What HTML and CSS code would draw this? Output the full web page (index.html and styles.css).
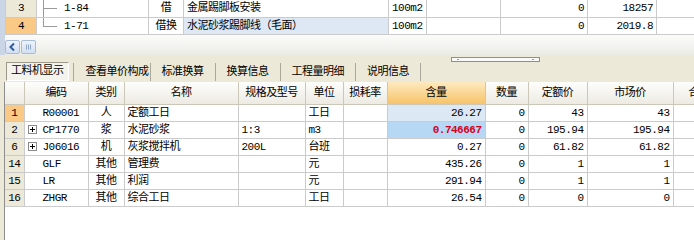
FILE: index.html
```html
<!DOCTYPE html>
<html lang="zh-CN">
<head>
  <meta charset="UTF-8" />
  <title>工料机显示</title>
  <link rel="stylesheet" href="styles.css">
</head>
<body>

<!-- upper grid: sub items -->
<div class="upper">
  <table class="grid grid-top">
    <colgroup>
      <col style="width:31px"><col style="width:112px"><col style="width:35px"><col style="width:205px">
      <col style="width:38px"><col style="width:74px"><col style="width:87px"><col style="width:69px"><col style="width:60px">
    </colgroup>
    <tr>
      <td class="rn">3</td>
      <td class="tree mid">1-84</td>
      <td class="c">借</td>
      <td>金属踢脚板安装</td>
      <td>100m2</td>
      <td></td>
      <td class="n">0</td>
      <td class="n">18257</td>
      <td></td>
    </tr>
    <tr>
      <td class="rn on">4</td>
      <td class="tree last">1-71</td>
      <td class="c">借换</td>
      <td class="pick">水泥砂浆踢脚线（毛面）</td>
      <td>100m2</td>
      <td></td>
      <td class="n">0</td>
      <td class="n">2019.8</td>
      <td></td>
    </tr>
  </table>
  <div class="hscroll">
    <span class="sb-btn">
      <svg width="13" height="12" viewBox="0 0 13 12"><path d="M8 2.5 4.5 6 8 9.5" fill="none" stroke="#2f5d9e" stroke-width="2"/></svg>
    </span>
    <span class="sb-btn">
      <svg width="13" height="12" viewBox="0 0 13 12"><path d="M4.5 3.5v5M6.5 3.5v5M8.5 3.5v5" stroke="#8ea6c8" stroke-width="1"/></svg>
    </span>
  </div>
</div>

<!-- lower pane: resources -->
<div class="lower">
  <div class="splitter"><span class="grip"></span></div>

  <div class="tabs">
    <span class="tab on">工料机显示</span>
    <span class="tab first">查看单价构成</span>
    <span class="tab">标准换算</span>
    <span class="tab">换算信息</span>
    <span class="tab">工程量明细</span>
    <span class="tab end">说明信息</span>
  </div>

  <div class="sheet">
    <table class="grid grid-main">
      <colgroup>
        <col style="width:19px"><col style="width:64px"><col style="width:36px"><col style="width:114px">
        <col style="width:67px"><col style="width:38px"><col style="width:44px"><col style="width:98px">
        <col style="width:43px"><col style="width:59px"><col style="width:86px"><col style="width:52px">
      </colgroup>
      <thead>
        <tr>
          <th></th>
          <th>编码</th>
          <th>类别</th>
          <th>名称</th>
          <th>规格及型号</th>
          <th>单位</th>
          <th>损耗率</th>
          <th class="hot">含量</th>
          <th>数量</th>
          <th>定额价</th>
          <th>市场价</th>
          <th>合价</th>
        </tr>
      </thead>
      <tbody>
        <tr>
          <td class="rn on">1</td>
          <td class="code">R00001</td>
          <td class="c">人</td>
          <td>定额工日</td>
          <td></td>
          <td>工日</td>
          <td></td>
          <td class="n light">26.27</td>
          <td class="n">0</td>
          <td class="n">43</td>
          <td class="n">43</td>
          <td></td>
        </tr>
        <tr>
          <td class="rn">2</td>
          <td class="code exp"><svg class="plus" width="9" height="9" viewBox="0 0 9 9"><rect x="0.5" y="0.5" width="8" height="8" fill="#fff" stroke="#8a8a8a"/><path d="M2 4.5h5M4.5 2v5" stroke="#000"/></svg>CP1770</td>
          <td class="c">浆</td>
          <td>水泥砂浆</td>
          <td>1:3</td>
          <td>m3</td>
          <td></td>
          <td class="n focus">0.746667</td>
          <td class="n">0</td>
          <td class="n">195.94</td>
          <td class="n">195.94</td>
          <td></td>
        </tr>
        <tr>
          <td class="rn">6</td>
          <td class="code exp"><svg class="plus" width="9" height="9" viewBox="0 0 9 9"><rect x="0.5" y="0.5" width="8" height="8" fill="#fff" stroke="#8a8a8a"/><path d="M2 4.5h5M4.5 2v5" stroke="#000"/></svg>J06016</td>
          <td class="c">机</td>
          <td>灰浆搅拌机</td>
          <td>200L</td>
          <td>台班</td>
          <td></td>
          <td class="n">0.27</td>
          <td class="n">0</td>
          <td class="n">61.82</td>
          <td class="n">61.82</td>
          <td></td>
        </tr>
        <tr>
          <td class="rn">14</td>
          <td class="code">GLF</td>
          <td class="c">其他</td>
          <td>管理费</td>
          <td></td>
          <td>元</td>
          <td></td>
          <td class="n">435.26</td>
          <td class="n">0</td>
          <td class="n">1</td>
          <td class="n">1</td>
          <td></td>
        </tr>
        <tr>
          <td class="rn">15</td>
          <td class="code">LR</td>
          <td class="c">其他</td>
          <td>利润</td>
          <td></td>
          <td>元</td>
          <td></td>
          <td class="n">291.94</td>
          <td class="n">0</td>
          <td class="n">1</td>
          <td class="n">1</td>
          <td></td>
        </tr>
        <tr>
          <td class="rn">16</td>
          <td class="code">ZHGR</td>
          <td class="c">其他</td>
          <td>综合工日</td>
          <td></td>
          <td>工日</td>
          <td></td>
          <td class="n">26.54</td>
          <td class="n">0</td>
          <td class="n">0</td>
          <td class="n">0</td>
          <td></td>
        </tr>
      </tbody>
    </table>
  </div>
</div>

</body>
</html>
```

FILE: styles.css
```css
* {
  box-sizing: border-box;
}

body {
  margin: 0;
  width: 694px;
  height: 240px;
  overflow: hidden;
  font-family: "Liberation Mono", "Noto Sans CJK SC", monospace;
  font-size: 11px;
  letter-spacing: -0.5px;
  color: #000;
  background: #ece9d8;
}

/* upper grid */
.upper {
  height: 55px;
  border-left: 5px solid #cad6e5;
  background: #fff;
  overflow: hidden;
}

.grid {
  border-collapse: collapse;
  table-layout: fixed;
}

.grid td,
.grid th {
  height: 17px;
  padding: 0 3px;
  line-height: 16px;
  border: 1px solid #cbcbcb;
  white-space: nowrap;
  overflow: hidden;
  text-align: left;
  font-weight: normal;
}

.grid-top {
  width: 711px;
}

.grid-top tr:first-child td {
  border-top: none;
}

.grid td.c {
  text-align: center;
}

.grid td.n {
  text-align: right;
}

.grid td.rn {
  background: #ece9d8;
  text-align: center;
  padding: 0;
}

.grid td.rn.on {
  background: #f9c985;
}

.grid td.pick {
  background: #dee8f4;
}

/* tree connector lines */
.grid td.tree {
  padding-left: 27px;
}

.tree.mid {
  background:
    linear-gradient(#9a9a9a, #9a9a9a) 6px 0 / 1px 100% no-repeat,
    linear-gradient(#9a9a9a, #9a9a9a) 6px 8px / 14px 1px no-repeat;
}

.tree.last {
  background:
    linear-gradient(#9a9a9a, #9a9a9a) 6px 0 / 1px 9px no-repeat,
    linear-gradient(#9a9a9a, #9a9a9a) 6px 8px / 14px 1px no-repeat;
}

.hscroll {
  display: flex;
  gap: 1px;
  height: 21px;
  padding-top: 5px;
  background: linear-gradient(#fbfbfa, #ebebe5);
}

.sb-btn {
  display: flex;
  align-items: center;
  justify-content: center;
  width: 15px;
  height: 14px;
  border: 1px solid #a9bcd6;
  border-radius: 2px;
  background: linear-gradient(#eef3fb, #d3e0f1);
}

/* lower pane */
.lower {
  height: 185px;
}

.splitter {
  height: 7px;
  padding-top: 2px;
}

.grip {
  display: block;
  width: 89px;
  height: 5px;
  margin-left: 451px;
  border: 1px solid #8f8f8f;
  background:
    linear-gradient(#9a9a9a, #9a9a9a) 5px 1px / 2px 1px no-repeat,
    linear-gradient(#9a9a9a, #9a9a9a) 80px 1px / 2px 1px no-repeat,
    #fafafa;
}

.tabs {
  display: flex;
  align-items: flex-start;
  height: 20px;
  padding-left: 6px;
}

.tab {
  height: 18px;
  margin-top: 1px;
  padding: 0 11px;
  line-height: 18px;
  border-left: 1px solid #aca899;
  white-space: nowrap;
}

.tab.on {
  height: 19px;
  margin-top: 0;
  margin-right: 4px;
  padding: 0 4px;
  line-height: 17px;
  border: 1px solid #9c998b;
  border-right-color: #fff;
  border-bottom-color: #fff;
  background: #f4f3ec;
}

.tab.first {
  padding: 0 1px 0 12px;
}

.tab.end {
  border-right: 1px solid #aca899;
}

.sheet {
  height: 158px;
  margin-left: 4px;
  border-left: 1px solid #8e8e8e;
  background: #fff;
  overflow: hidden;
}

.grid-main {
  width: 720px;
}

.grid-main tr:first-child th {
  border-top: none;
}

.grid-main td:first-child,
.grid-main th:first-child {
  border-left: none;
}

.grid th {
  height: 22px;
  text-align: center;
  border-color: #cbc8ba;
  background: linear-gradient(#fdfdfb, #eceae2);
}

.grid th.hot {
  background: linear-gradient(#fde9c0, #f6c368);
}

.grid td.code {
  padding-left: 18px;
}

.grid td.code.exp {
  padding-left: 3px;
}

.plus {
  margin-right: 6px;
  vertical-align: -1px;
}

.grid td.light {
  background: #dde8f5;
}

.grid td.focus {
  background: #b7d8f4;
  color: #d1001c;
  font-weight: bold;
}
```
